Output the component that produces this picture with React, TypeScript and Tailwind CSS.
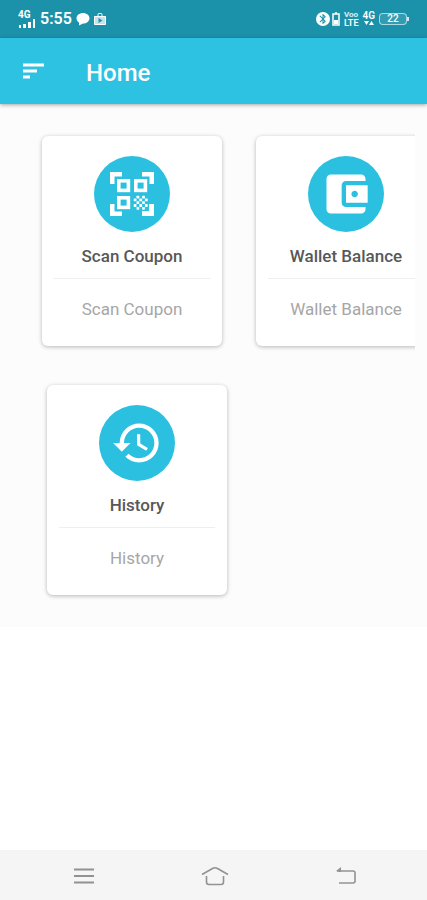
import type { ReactNode } from "react";
import { MdAccountBalanceWallet, MdBluetooth, MdHistory } from "react-icons/md";

interface MenuCardProps {
  title: string
  subtitle: string
  icon: ReactNode
}

const finders = [
  [7, 7],
  [24, 7],
  [7, 24],
];

const QrIcon = () => (
  <svg viewBox="0 0 44 44" className="size-11" fill="none" stroke="currentColor" strokeWidth="4.5">
    <path d="M2.250 12V2.250H12M32 2.250h9.750V12M2.250 32v9.750H12M32 41.750h9.750V32" />
    <path d="M39 39h-7v5h12V32h-5z" fill="currentColor" stroke="none" />
    {finders.map(([x, y]) => (
      <rect key={`${x}-${y}`} x={x + 1.8} y={y + 1.8} width="9.6" height="9.6" strokeWidth="3.6" />
    ))}
    {Array.from({ length: 25 }, (_, i) => i)
      .filter((i) => i % 2 === 1)
      .map((i) => (
        <rect
          key={i}
          x={23.7 + (i % 5) * 2.8}
          y={23.7 + Math.floor(i / 5) * 2.8}
          width="2.8"
          height="2.8"
          rx="0.6"
          fill="currentColor"
          stroke="none"
        />
      ))}
  </svg>
);

const MenuCard = ({ title, subtitle, icon }: MenuCardProps) => (
  <a
    href="#"
    className="flex h-[210px] w-[180px] shrink-0 flex-col items-center rounded-md bg-white px-3 pt-5 shadow-[0_1px_4px_rgba(0,0,0,0.28)]"
  >
    <span className="flex size-[76px] items-center justify-center rounded-full bg-[#2bc0e0] text-white">{icon}</span>
    <span className="mt-3 text-[17px] leading-6 font-medium whitespace-nowrap text-[#585858]">{title}</span>
    <span className="mt-2.5 w-full border-t border-[#efefef]" />
    <span className="mt-[18px] text-[17px] leading-6 whitespace-nowrap text-[#a6a6a6]">{subtitle}</span>
  </a>
);

const StatusBar = () => (
  <div className="flex h-[38px] items-center justify-between bg-[#1b92aa] px-[18px] text-white">
    <div className="flex items-center gap-1">
      <div className="flex flex-col">
        <span className="text-[10px] leading-2 font-bold">4G</span>
        <svg viewBox="0 0 18 9" className="h-[9px] w-[18px]" fill="currentColor">
          <path d="M1 6h2v3H1zM5 5h3v4H5zM10 3h3v6h-3zM15 0h2v9h-2z" />
        </svg>
      </div>
      <span className="text-base leading-5 font-semibold">5:55</span>
      <svg viewBox="0 0 14 14" className="size-3.5" fill="currentColor">
        <path d="M7 1c3.600 0 6.500 2.300 6.500 5.300S10.600 11.600 7 11.600L3 13.500v-3C1.500 9.600.5 8 .5 6.300.5 3.300 3.400 1 7 1z" />
      </svg>
      <svg viewBox="0 0 12 14" className="h-3.5 w-3" fill="none" stroke="currentColor">
        <path d="M4 5V2.500A1 1 0 0 1 5 1.500h2a1 1 0 0 1 1 1V5" />
        <path d="M.5 4.500h11v8h-11z" fill="currentColor" fillOpacity="0.75" />
        <path d="M4.500 6v5L8.500 8.500z" fill="#1b92aa" stroke="none" />
      </svg>
    </div>
    <div className="flex items-center gap-0.5">
      <span className="flex size-3.5 items-center justify-center rounded-full bg-white text-[#1b92aa]">
        <MdBluetooth className="size-3" />
      </span>
      <svg viewBox="0 0 8 14" className="h-3.5 w-2" fill="none" stroke="currentColor" strokeWidth="1.5">
        <path d="M1 2h6v11H1zM3 1h2" />
        <path d="M2 8h4v4H2z" fill="currentColor" stroke="none" />
      </svg>
      <span className="ml-0.5 flex flex-col text-[9px] leading-2 font-semibold">
        <span className="text-[8px] text-white/90">Voo</span>
        <span>LTE</span>
      </span>
      <span className="ml-0.5 flex flex-col items-center text-[10px] leading-2 font-semibold">
        4G
        <svg viewBox="0 0 10 6" className="h-1.5 w-2.5" fill="currentColor">
          <path d="M0 1h5L2.500 5zM5 5h5L7.500 1z" />
        </svg>
      </span>
      <span className="ml-0.5 flex items-center">
        <span className="flex h-3 w-7 items-center justify-center rounded-sm border border-white/60 bg-white/10 text-[10px] leading-none font-medium">
          22
        </span>
        <span className="h-1 w-0.5 bg-white/80" />
      </span>
    </div>
  </div>
);

const App = () => {
  return (
    <div className="flex min-h-screen flex-col bg-white font-['Roboto',sans-serif]">
      <StatusBar />
      <header className="z-10 flex h-[66px] items-center bg-[#2dc1e2] pl-[22px] text-white shadow-[0_1px_4px_rgba(0,0,0,0.35)]">
        <button type="button" aria-label="Menu">
          <svg viewBox="0 0 22 16" className="h-4 w-[22px]" fill="none" stroke="currentColor" strokeWidth="3">
            <path d="M1 2h21M1 8h14M1 14h7" />
          </svg>
        </button>
        <h1 className="ml-[42px] pt-1 text-2xl leading-7 font-medium">Home</h1>
      </header>

      <main className="flex flex-col bg-[#fcfcfc] pb-8">
        <div className="mr-3 flex gap-[34px] overflow-hidden pt-8 pb-[19px] pl-[42px]">
          <MenuCard title="Scan Coupon" subtitle="Scan Coupon" icon={<QrIcon />} />
          <MenuCard
            title="Wallet Balance"
            subtitle="Wallet Balance"
            icon={<MdAccountBalanceWallet className="size-[52px]" />}
          />
        </div>
        <div className="flex pt-5 pl-[47px]">
          <MenuCard title="History" subtitle="History" icon={<MdHistory className="size-[52px]" />} />
        </div>
      </main>

      <nav className="mt-auto flex h-[50px] items-center justify-around bg-[#f5f5f5] pt-0.5 pr-[18px] pl-5 text-[#929292]">
        <button type="button" aria-label="Recent apps">
          <svg viewBox="0 0 20 18" className="h-[18px] w-5" fill="none" stroke="currentColor" strokeWidth="1.8">
            <path d="M0 2.500h20M0 9h20M0 15.500h20" />
          </svg>
        </button>
        <button type="button" aria-label="Home">
          <svg viewBox="0 0 28 20" className="h-5 w-7" fill="none" stroke="currentColor" strokeWidth="1.6">
            <path d="M1 8.500L11.500 2.500Q14 1 16.500 2.500L27 8.500" />
            <path d="M5.500 10v6q0 2.500 2.500 2.500h12q2.500 0 2.500-2.500v-6" />
          </svg>
        </button>
        <button type="button" aria-label="Back">
          <svg viewBox="0 0 20 18" className="h-[18px] w-5" fill="none" stroke="currentColor" strokeWidth="1.6">
            <path d="M1 4h16q2 0 2 2v8q0 2-2 2H3" />
            <path d="M0 4L5 0v5z" fill="currentColor" stroke="none" />
          </svg>
        </button>
      </nav>
    </div>
  )
}

export default App
